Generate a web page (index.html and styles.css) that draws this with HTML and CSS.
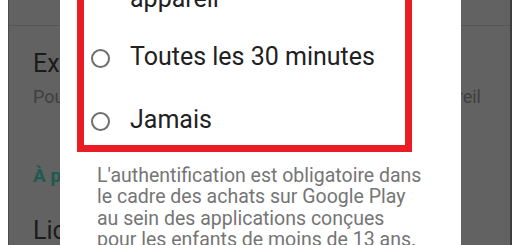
FILE: index.html
```html
<!DOCTYPE html>
<html lang="fr">
<head>
<meta charset="utf-8">
<title>Authentification</title>
<link rel="stylesheet" href="styles.css">
</head>
<body>
<div class="screen">
  <div class="sep"></div>
  <div class="pref">
    <div class="pref-title">Exiger l'authentification</div>
    <div class="pref-sub"><span>Pour tous les achats via Google Play sur cet</span><span>appareil</span></div>
  </div>
  <div class="section">À propos</div>
  <div class="pref-title lic">Licences Open Source</div>

  <div class="dialog">
    <div class="choices">
      <div class="opt first">
        <span class="radio"></span>
        <span class="label"><span class="ln">Pour tous les achats sur cet</span><span class="ln">appareil</span></span>
      </div>
      <div class="opt">
        <span class="radio"></span>
        <span class="label">Toutes les 30 minutes</span>
      </div>
      <div class="opt">
        <span class="radio"></span>
        <span class="label">Jamais</span>
      </div>
    </div>
    <p class="desc">L'authentification est obligatoire dans le cadre des achats sur Google Play au sein des applications conçues pour les enfants de moins de 13 ans.</p>
  </div>
</div>
</body>
</html>
```
FILE: styles.css
```css
html, body {
  margin: 0;
  padding: 0;
  background: #ffffff;
}
body {
  width: 520px;
  height: 245px;
  overflow: hidden;
  font-family: Roboto, "Noto Sans", sans-serif;
}
.screen {
  position: relative;
  margin: 0 8px;
  height: 245px;
  background: #626262;
  border-left: 1px solid #4c4c4c;
  border-right: 2px solid #3e3e3e;
  padding-top: 25px;
  box-sizing: border-box;
}
.sep {
  height: 1px;
  background: #565656;
}
.pref {
  padding: 0 29px 0 24px;
}
.pref-title {
  font-size: 25px;
  line-height: 26px;
  color: #1b1b1b;
  white-space: nowrap;
  margin-top: 25.45px;
  padding-left: 24px;
}
.pref .pref-title {
  padding-left: 0;
}
.pref-sub {
  display: flex;
  justify-content: space-between;
  font-size: 18px;
  line-height: 20px;
  color: #3f3f3f;
  margin-top: 9.95px;
  white-space: nowrap;
}
.section {
  padding-left: 24px;
  margin-top: 59.1px;
  font-size: 19px;
  font-weight: bold;
  line-height: 20px;
  color: #1f5a50;
}
.lic {
  margin-top: 31.95px;
}
.dialog {
  position: absolute;
  left: 51px;
  top: -59.05px;
  width: 401px;
  height: 360px;
  background: #ffffff;
}
.choices {
  margin-left: 17px;
  width: 335px;
  box-sizing: border-box;
  border: 7px solid #ec1c24;
  padding: 12px 0 13.5px 7px;
}
.opt {
  display: flex;
  align-items: center;
  font-size: 25px;
  line-height: 24px;
  color: #212121;
  white-space: nowrap;
}
.opt.first {
  align-items: flex-start;
  line-height: 26px;
  margin-bottom: 32.55px;
}
.opt + .opt + .opt {
  margin-top: 39px;
}
.radio {
  flex: none;
  width: 19px;
  height: 19px;
  box-sizing: border-box;
  border: 2px solid #6e6e6e;
  border-radius: 50%;
  margin-right: 20px;
  margin-top: 3px;
}
.opt.first .radio {
  margin-top: 4px;
}
.ln {
  display: block;
}
.desc {
  margin: 12.6px 0 0 37px;
  width: 327px;
  font-size: 19.5px;
  line-height: 21.5px;
  color: #757575;
}
```
